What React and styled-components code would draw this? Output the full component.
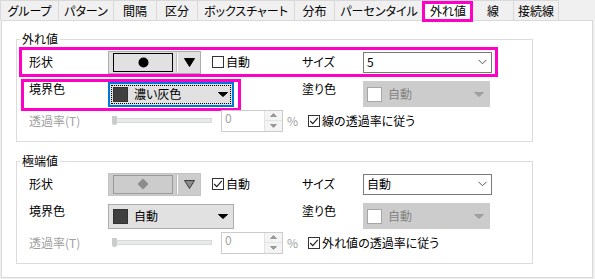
import React from 'react';
import styled, { createGlobalStyle, css } from 'styled-components';

const GlobalStyle = createGlobalStyle`
  body {
    margin: 0;
    background: #f0f0f0;
    font-family: "Noto Sans CJK JP", "Noto Sans", sans-serif;
    font-size: 12px;
    font-feature-settings: "palt" 1;
    color: #000;
  }
`;

const tabs = [
  { label: 'グループ', width: 59 },
  { label: 'パターン', width: 55 },
  { label: '間隔', width: 43 },
  { label: '区分', width: 41 },
  { label: 'ボックスチャート', width: 97 },
  { label: '分布', width: 40 },
  { label: 'パーセンタイル', width: 89 },
  { label: '外れ値', width: 49, active: true },
  { label: '線', width: 41 },
  { label: '接続線', width: 45 },
];

const PINK = '#ff00c8';
const GRAY_TEXT = '#a0a0a0';

const Page = styled.div`
  width: 595px;
  height: 279px;
  overflow: hidden;
`;

const TabBar = styled.div`
  display: flex;
  height: 20px;
  position: relative;
  z-index: 1;
`;

const Tab = styled.div`
  width: ${({ $w }) => $w}px;
  height: 20px;
  box-sizing: border-box;
  border: 1px solid #d9d9d9;
  border-left: none;
  border-bottom: none;
  background: #f0f0f0;
  line-height: 19px;
  text-align: center;
  white-space: nowrap;
  position: relative;

  &:first-child {
    border-left: 1px solid #d9d9d9;
  }

  ${({ $active }) => $active && css`
    background: #fff;
    height: 21px;

    &::after {
      content: '';
      position: absolute;
      left: -2px;
      right: -1px;
      top: 0;
      bottom: -1px;
      border: 3px solid ${PINK};
    }
  `}
`;

const Panel = styled.div`
  margin-left: 1px;
  width: 592px;
  height: 258px;
  box-sizing: border-box;
  background: #fff;
  border: 1px solid #d9d9d9;
  overflow: hidden;
`;

const Group = styled.fieldset`
  margin: ${({ $top }) => $top}px 0 0 14px;
  padding: 0 0 10px 0;
  width: 517px;
  min-width: 0;
  box-sizing: border-box;
  border: 1px solid #dcdcdc;
`;

const GroupTitle = styled.legend`
  margin-left: 3px;
  padding: 0 2px;
  line-height: 14px;
`;

const Row = styled.div`
  position: relative;
  display: flex;
  align-items: center;
  height: ${({ $h }) => $h}px;
  padding-left: 12px;
`;

const Highlight = styled.div`
  position: absolute;
  left: ${({ $x }) => $x}px;
  top: ${({ $y }) => $y}px;
  width: ${({ $w }) => $w}px;
  height: ${({ $h }) => $h}px;
  box-sizing: border-box;
  border: 3px solid ${PINK};
  pointer-events: none;
`;

const Cell = styled.div`
  flex-shrink: 0;
  width: ${({ $w }) => $w}px;
  margin-left: ${({ $ml = 0 }) => $ml}px;
  display: flex;
  align-items: center;
`;

const Label = styled.div`
  flex-shrink: 0;
  width: ${({ $w }) => $w}px;
  line-height: 14px;
  white-space: nowrap;
  color: ${({ $dim }) => ($dim ? GRAY_TEXT : '#000')};
  align-self: ${({ $top }) => ($top ? 'flex-start' : 'center')};
  margin-top: ${({ $top }) => ($top ? '4px' : '0')};
`;

/* shape picker */
const ShapeButton = styled.div`
  display: flex;
  align-items: center;
  width: 93px;
  height: 23px;
  box-sizing: border-box;
  background: ${({ $disabled }) => ($disabled ? '#cccccc' : '#e1e1e1')};
  border: 1px solid ${({ $disabled }) => ($disabled ? '#c4c4c4' : '#adadad')};
`;

const ShapePreview = styled.div`
  margin-left: 4px;
  width: 60px;
  height: 19px;
  box-sizing: border-box;
  border: 1px solid ${({ $disabled }) => ($disabled ? '#9a9a9a' : '#000')};
  display: flex;
  align-items: center;
  justify-content: center;
`;

const ShapeDivider = styled.div`
  margin-left: 3px;
  width: 1px;
  height: 19px;
  background: #fff;
  border-left: 1px solid #bdbdbd;
`;

const ArrowSlot = styled.div`
  flex: 1;
  display: flex;
  justify-content: center;
  align-items: center;
`;

/* colour dropdown */
const ColorDrop = styled.div`
  position: relative;
  display: flex;
  align-items: center;
  width: 126px;
  height: 25px;
  box-sizing: border-box;
  background: #e1e1e1;
  ${({ $focused }) => ($focused
    ? css`
      border: 2px solid #0078d7;
      padding-left: 3px;
      &::before {
        content: '';
        position: absolute;
        inset: 1px;
        border: 1px dotted #000;
      }
    `
    : css`
      border: 1px solid #adadad;
      padding-left: 4px;
    `)}
`;

const Swatch = styled.div`
  width: 15px;
  height: 15px;
  box-sizing: border-box;
  background: ${({ $color }) => $color};
  border: 1px solid ${({ $border }) => $border};
  flex-shrink: 0;
`;

const DropText = styled.span`
  margin-left: 6px;
  flex: 1;
  line-height: 14px;
  color: ${({ $dim }) => ($dim ? '#838383' : '#000')};
`;

const DropArrow = styled.div`
  margin-right: ${({ $mr }) => $mr}px;
  display: flex;
`;

const FillCombo = styled.div`
  display: flex;
  align-items: center;
  width: 127px;
  height: 26px;
  box-sizing: border-box;
  background: #cccccc;
  border: 1px solid #cccccc;
  padding-left: 3px;
`;

/* size combo */
const Combo = styled.div`
  display: flex;
  align-items: center;
  width: 129px;
  height: 21px;
  box-sizing: border-box;
  background: #fff;
  border: 1px solid #7a7a7a;
  padding: 0 4px 0 3px;
`;

const ComboText = styled.span`
  flex: 1;
  line-height: 14px;
`;

/* checkbox */
const Check = styled.label`
  display: flex;
  align-items: center;
  margin-left: ${({ $ml = 0 }) => $ml}px;
  white-space: nowrap;
  line-height: 14px;
`;

const Box = styled.span`
  width: 12px;
  height: 12px;
  box-sizing: border-box;
  border: 1px solid #333;
  background: #fff;
  margin-right: 2px;
  display: flex;
  align-items: center;
  justify-content: center;
`;

/* slider + spin */
const Slider = styled.div`
  position: relative;
  width: 100px;
  height: 10px;
  flex-shrink: 0;
  display: flex;
  align-items: center;
`;

const Track = styled.div`
  flex: 1;
  height: 3px;
  background: #e7eaea;
  border: 1px solid #d9d9d9;
`;

const Thumb = styled.div`
  position: absolute;
  left: 0;
  top: 0;
  width: 5px;
  height: 9px;
  background: #cccccc;
  border-radius: 0 0 2px 2px;
`;

const Spin = styled.div`
  display: flex;
  width: 62px;
  height: 22px;
  margin-left: 9px;
  box-sizing: border-box;
  border: 1px solid #cccccc;
  background: #fff;
  flex-shrink: 0;
`;

const SpinValue = styled.div`
  flex: 1;
  padding: 1px 0 0 3px;
  line-height: 12px;
  color: ${GRAY_TEXT};
`;

const SpinButtons = styled.div`
  width: 17px;
  display: flex;
  flex-direction: column;
  background: #f4f4f4;
  border-left: 1px solid #e3e3e3;
`;

const SpinHalf = styled.div`
  flex: 1;
  display: flex;
  align-items: center;
  justify-content: center;
  & + & {
    border-top: 1px solid #e3e3e3;
  }
`;

const Percent = styled.span`
  margin-left: 4px;
  color: ${GRAY_TEXT};
  line-height: 14px;
`;

const Triangle = ({ w = 10, h = 8, fill = '#000', stroke, up }) => (
  <svg width={w} height={h} viewBox={`0 0 ${w} ${h}`}>
    <polygon
      points={up ? `0.5,${h - 0.5} ${w / 2},0.5 ${w - 0.5},${h - 0.5}` : `0.5,0.5 ${w - 0.5},0.5 ${w / 2},${h - 0.5}`}
      fill={fill}
      stroke={stroke || fill}
      strokeWidth="1"
    />
  </svg>
);

const Chevron = () => (
  <svg width="9" height="6" viewBox="0 0 9 6">
    <polyline points="0.5,0.8 4.5,4.8 8.5,0.8" fill="none" stroke="#555" strokeWidth="1" />
  </svg>
);

const Tick = () => (
  <svg width="10" height="10" viewBox="0 0 10 10">
    <polyline points="1.2,5 3.8,7.6 8.8,1.8" fill="none" stroke="#222" strokeWidth="1.2" />
  </svg>
);

const Checkbox = ({ checked, children, ml }) => (
  <Check $ml={ml}>
    <Box>{checked && <Tick />}</Box>
    {children}
  </Check>
);

const ShapePicker = ({ disabled }) => (
  <ShapeButton $disabled={disabled}>
    <ShapePreview $disabled={disabled}>
      {disabled ? (
        <svg width="12" height="12" viewBox="0 0 12 12">
          <polygon points="6,0.5 11.5,6 6,11.5 0.5,6" fill="#8c8c8c" />
        </svg>
      ) : (
        <svg width="11" height="11" viewBox="0 0 11 11">
          <circle cx="5.5" cy="5.5" r="5" fill="#000" />
        </svg>
      )}
    </ShapePreview>
    <ShapeDivider />
    <ArrowSlot>
      {disabled
        ? <Triangle w={11} h={9} fill="#8a8a8a" stroke="#3c3c3c" />
        : <Triangle w={11} h={9} />}
    </ArrowSlot>
  </ShapeButton>
);

const TransparencyRow = ({ followLabel }) => (
  <Row $h={21}>
    <Label $w={83} $dim>透過率(T)</Label>
    <Slider>
      <Track />
      <Thumb />
    </Slider>
    <Spin>
      <SpinValue>0</SpinValue>
      <SpinButtons>
        <SpinHalf><Triangle w={7} h={4} fill="#9a9a9a" up /></SpinHalf>
        <SpinHalf><Triangle w={7} h={4} fill="#9a9a9a" /></SpinHalf>
      </SpinButtons>
    </Spin>
    <Percent>%</Percent>
    <Checkbox checked ml={10}>{followLabel}</Checkbox>
  </Row>
);

const FillRow = () => (
  <>
    <Label $w={61} $top>塗り色</Label>
    <FillCombo>
      <Swatch $color="#fff" $border="#a6a6a6" />
      <DropText $dim>自動</DropText>
      <DropArrow $mr={5}><Triangle w={10} h={5} fill="#a0a0a0" /></DropArrow>
    </FillCombo>
  </>
);

const App = () => (
  <Page>
    <GlobalStyle />
    <TabBar>
      {tabs.map((t) => (
        <Tab key={t.label} $w={t.width} $active={t.active}>{t.label}</Tab>
      ))}
    </TabBar>
    <Panel>
      <Group $top={11}>
        <GroupTitle>外れ値</GroupTitle>
        <Row $h={32}>
          <Highlight $x={2} $y={1} $w={479} $h={30} />
          <Label $w={79}>形状</Label>
          <Cell $w={104}><ShapePicker /></Cell>
          <Cell $w={90}><Checkbox>自動</Checkbox></Cell>
          <Label $w={61}>サイズ</Label>
          <Combo>
            <ComboText>5</ComboText>
            <Chevron />
          </Combo>
        </Row>
        <Row $h={32}>
          <Highlight $x={4} $y={1} $w={220} $h={32} />
          <Label $w={79} $top>境界色</Label>
          <Cell $w={194}>
            <ColorDrop $focused>
              <Swatch $color="#404040" $border="#333" />
              <DropText>濃い灰色</DropText>
              <DropArrow $mr={4}><Triangle w={10} h={5} /></DropArrow>
            </ColorDrop>
          </Cell>
          <FillRow />
        </Row>
        <TransparencyRow followLabel="線の透過率に従う" />
      </Group>

      <Group $top={12}>
        <GroupTitle>極端値</GroupTitle>
        <Row $h={32}>
          <Label $w={79}>形状</Label>
          <Cell $w={104}><ShapePicker disabled /></Cell>
          <Cell $w={90}><Checkbox checked>自動</Checkbox></Cell>
          <Label $w={61}>サイズ</Label>
          <Combo>
            <ComboText>自動</ComboText>
            <Chevron />
          </Combo>
        </Row>
        <Row $h={32}>
          <Label $w={79} $top>境界色</Label>
          <Cell $w={194}>
            <ColorDrop>
              <Swatch $color="#404040" $border="#333" />
              <DropText>自動</DropText>
              <DropArrow $mr={5}><Triangle w={10} h={5} /></DropArrow>
            </ColorDrop>
          </Cell>
          <FillRow />
        </Row>
        <TransparencyRow followLabel="外れ値の透過率に従う" />
      </Group>
    </Panel>
  </Page>
);

export default App;
